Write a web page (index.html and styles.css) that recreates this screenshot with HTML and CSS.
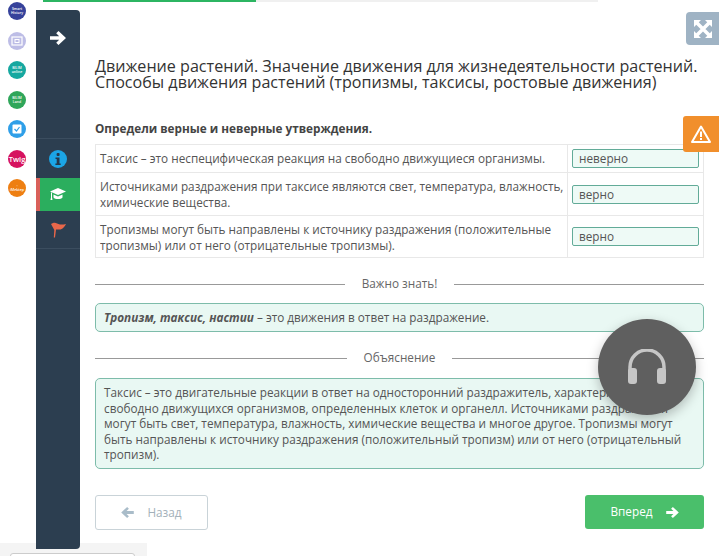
FILE: index.html
```html
<!DOCTYPE html>
<html lang="ru">
<head>
<meta charset="utf-8">
<title>Движение растений</title>
<link rel="stylesheet" href="styles.css">
</head>
<body>
<div class="page">
  <nav class="rail">
    <span class="app a1">Smart<br>History</span>
    <span class="app a2"><svg width="12" height="10" viewBox="0 0 12 10"><rect x="1" y="1" width="10" height="8" fill="none" stroke="#fff" stroke-width="1.2"/><rect x="4" y="3.5" width="4" height="3" fill="none" stroke="#fff"/></svg></span>
    <span class="app a3">BILIM<br>online</span>
    <span class="app a4">BILIM<br>Land</span>
    <span class="app a5"><svg width="10" height="10" viewBox="0 0 10 10"><rect x=".5" y=".5" width="9" height="9" rx="1" fill="#fff"/><path d="M2.5 5l2 2 3-4" fill="none" stroke="#2f9fe8" stroke-width="1.2"/></svg></span>
    <span class="app a6">Twig</span>
    <span class="app a7">◦<br>iMektep</span>
  </nav>
  <aside class="side">
    <div class="side-top">
      <svg width="16" height="14" viewBox="0 0 16 14"><path d="M8.500 0l7.500 7-7.500 7-2.300-2.200 3-3H0V5.200h9.200l-3-3z" fill="#fff"/></svg>
    </div>
    <div class="side-item">
      <svg width="18" height="18" viewBox="0 0 18 18"><circle cx="9" cy="9" r="9" fill="#1ba5e6"/><rect x="7.600" y="3" width="3" height="3" rx="1" fill="#24384c"/><path d="M6.500 7.500h4v6h1.200v1.500H6.400v-1.500h1.300V9H6.500z" fill="#24384c"/></svg>
    </div>
    <div class="side-item active">
      <svg width="16" height="13" viewBox="0 0 16 13"><path d="M8 0l8 3.500-8 3.500-8-3.500z" fill="#fff"/><path d="M3.500 6.500L8 8.500l4.500-2v3C11 11.500 5 11.500 3.500 9.500zM1 4.500h1v5l.5 2.500h-2L1 9.500z" fill="#fff"/></svg>
    </div>
    <div class="side-item">
      <svg width="17" height="16" viewBox="0 0 17 16"><path d="M3 1c3-1 4 1 7 1.500 2 .3 4 0 6-.5-1 2-2.500 3.500-3.500 4.500-2 1.500-4.500 1-6.500 1l-1 8H3.800L4.300 8 1 2z" fill="#e8674a"/></svg>
    </div>
  </aside>
  <main class="content">
    <div class="progress"><span class="progress-fill"></span></div>
    <h1 class="title">Движение растений. Значение движения для жизнедеятельности растений. Способы движения растений (тропизмы, таксисы, ростовые движения)</h1>
    <p class="task">Определи верные и неверные утверждения.</p>
    <div class="table">
      <div class="row r1"><div class="q">Таксис – это неспецифическая реакция на свободно движущиеся организмы.</div><div class="a"><span class="chip">неверно</span></div></div>
      <div class="row r2"><div class="q">Источниками раздражения при таксисе являются свет, температура, влажность, химические вещества.</div><div class="a"><span class="chip">верно</span></div></div>
      <div class="row r3"><div class="q">Тропизмы могут быть направлены к источнику раздражения (положительные тропизмы) или от него (отрицательные тропизмы).</div><div class="a"><span class="chip">верно</span></div></div>
    </div>
    <div class="divider first"><span>Важно знать!</span></div>
    <div class="box short"><b>Тропизм, таксис, настии</b> – это движения в ответ на раздражение.</div>
    <div class="divider"><span>Объяснение</span></div>
    <div class="box long">Таксис – это двигательные реакции в ответ на односторонний раздражитель, характерные для свободно движущихся организмов, определенных клеток и органелл. Источниками раздражения могут быть свет, температура, влажность, химические вещества и многое другое. Тропизмы могут быть направлены к источнику раздражения (положительный тропизм) или от него (отрицательный тропизм).</div>
    <div class="nav">
      <button class="btn back"><svg width="13" height="11" viewBox="0 0 16 14"><path d="M7.500 0L0 7l7.500 7 2.300-2.200-3-3H16V5.200H6.800l3-3z" fill="#a9bcc9"/></svg><span>Назад</span></button>
      <button class="btn next"><span>Вперед</span><svg width="13" height="11" viewBox="0 0 16 14"><path d="M8.500 0l7.500 7-7.500 7-2.300-2.200 3-3H0V5.200h9.200l-3-3z" fill="#fff"/></svg></button>
    </div>
  </main>
</div>
<div class="full"><svg width="20" height="20" viewBox="0 0 20 20"><path d="M3 3l14 14M17 3L3 17" stroke="#fff" stroke-width="3.500"/><path d="M1 1h7L1 8zM19 1h-7l7 7zM1 19h7l-7-7zM19 19h-7l7-7z" fill="#fff"/></svg></div>
<div class="warn"><svg width="20" height="18" viewBox="0 0 20 18"><path d="M10 1.500L19 17H1z" fill="none" stroke="#fff" stroke-width="2" stroke-linejoin="round"/><path d="M9 6.500h2V12H9zM9 13h2v2H9z" fill="#fff"/></svg></div>
<div class="audio"><svg width="40" height="36" viewBox="0 0 40 36"><path d="M3 24V18a17 17 0 0 1 34 0v6" fill="none" stroke="#c6c6c6" stroke-width="3.500"/><rect x="1" y="19" width="9" height="16" rx="3" fill="#c6c6c6"/><rect x="30" y="19" width="9" height="16" rx="3" fill="#c6c6c6"/></svg></div>
<div class="dock"><span class="dock-card"></span></div>
</body>
</html>
```
FILE: styles.css
```css
* { box-sizing: border-box; }
html, body { margin: 0; height: 100%; overflow: hidden; }
html { background: #fff; }
body { font-family: "Open Sans", sans-serif; font-size: 11.75px; line-height: 15.6px; color: #555; }
.page { display: flex; height: 556px; }
.rail { width: 36px; flex: none; padding-top: 2px; display: flex; flex-direction: column; align-items: center; gap: 11.500px; padding-right: 2px; }
.app { width: 18px; height: 18px; border-radius: 50%; display: flex; align-items: center; justify-content: center; text-align: center; color: #fff; font-size: 3.500px; line-height: 4px; font-weight: 600; }
.a1 { background: #36429b; }
.a2 { background: #bdbde6; }
.a3 { background: #16a8a0; }
.a4 { background: #2fa65a; }
.a5 { background: #2f9fe8; }
.a6 { background: #d6125f; font-size: 7.500px; }
.a7 { background: #ee7f12; }
.side { width: 44px; flex: none; margin: 10px 0 7px; background: #2c3e50; border-radius: 0 4px 4px 0; position: relative; z-index: 1; }
.side-top { height: 129px; display: flex; justify-content: center; padding-top: 21px; border-bottom: 1px solid #3b4d5f; }
.side-item { height: 39px; display: flex; align-items: center; justify-content: center; }
.side-item.active { height: 33px; background: #2bae5e; border-left: 4px solid #d9605a; padding-right: 4px; }
.side-item:last-child { border-bottom: 1px solid #3b4d5f; height: 38px; }
.content { width: 639px; flex: none; padding: 0 15px; }
.progress { height: 2px; background: #f0f0f0; margin-left: -52px; width: 555px; }
.progress-fill { display: block; width: 213px; height: 2px; background: #2cb562; }
.title { margin: 56px 0 0; font-size: 16.120px; line-height: 16px; font-weight: 400; color: #333; }
.task { margin: 30px 0 0; font-weight: 700; font-size: 11.750px; line-height: 16px; color: #444; }
.table { margin-top: 8px; border: 1px solid #e8e8e8; }
.row { display: flex; border-top: 1px solid #e8e8e8; }
.row:first-child { border-top: 0; }
.r1 { height: 27px; }
.r2 { height: 43px; }
.r3 { height: 42px; }
.q { width: 472px; padding: 6px 2px 0 4px; border-right: 1px solid #e8e8e8; }
.a { flex: 1; padding: 4px 4px 0; }
.r2 .a { padding-top: 12px; }
.r3 .a { padding-top: 11px; }
.chip { display: block; height: 19px; padding: 0 6px; line-height: 17px; border: 1px solid #62ab98; border-radius: 2px; background: #eefaf6; }
.divider { display: flex; align-items: center; gap: 17px; margin-top: 18px; height: 16px; color: #666; }
.divider::before, .divider::after { content: ""; flex: 1; height: 1px; background: #999; }
.divider span { flex: none; }
.box { margin-top: 11px; padding: 6px 8px; border: 1px solid #7dbcaa; border-radius: 5px; background: #e9f8f3; }
.box b { font-style: italic; }
.short { height: 29px; }
.long { margin-top: 12px; padding: 6px 8px 5px; height: 91px; }
.nav { display: flex; justify-content: space-between; margin-top: 26px; }
.btn { font: inherit; height: 35px; border-radius: 3px; display: flex; align-items: center; justify-content: center; gap: 13px; }
.back { width: 113px; background: #fff; border: 1px solid #c9d3d8; color: #a3b1ba; }
.next { width: 119px; height: 34px; background: #4abf6b; border: 0; color: #fff; }
.full { position: absolute; left: 686px; top: 12px; width: 33px; height: 33px; background: #9fb3c4; border-radius: 4px 0 0 4px; display: flex; align-items: center; justify-content: center; }
.warn { position: absolute; left: 683px; top: 116px; width: 36px; height: 36px; background: #f18f2c; border-radius: 3px 0 0 3px; display: flex; align-items: center; justify-content: center; }
.audio { position: absolute; left: 598px; top: 319px; width: 98px; height: 96px; border-radius: 50%; background: #5f5f5f; box-shadow: 0 4px 12px rgba(0,0,0,.25); display: flex; align-items: center; justify-content: center; }
.dock { position: absolute; left: 0; top: 543px; width: 147px; height: 13px; background: #f4f4f4; padding: 10px 12px 0 10px; }
.dock-card { display: block; height: 10px; background: #fff; border: 1px solid #ccc; border-radius: 3px; }
```
